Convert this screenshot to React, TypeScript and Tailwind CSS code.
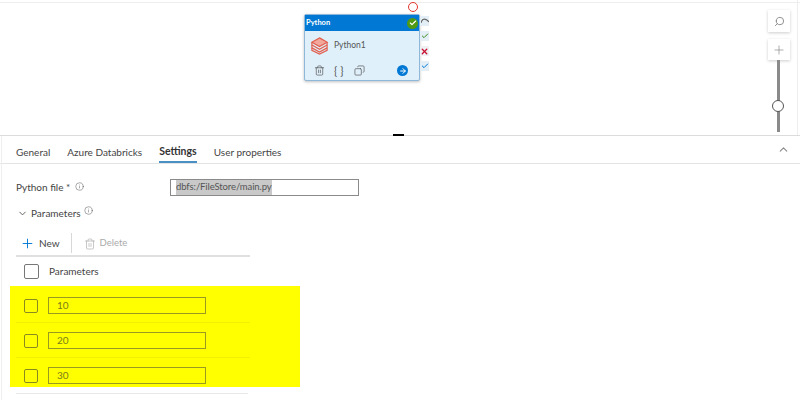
import { ChevronDown, ChevronUp, Copy, Info, Plus, Search, Trash2, ArrowRight, Check, X } from "lucide-react"

const tabs = ["General", "Azure Databricks", "Settings", "User properties"]

// Databricks style stacked layers logo
const LayersLogo = () => (
  <svg width="19" height="19" viewBox="0 0 20 20" fill="none" stroke="#e2604f" strokeWidth="1.3">
    <path d="M10 2 L18 6.5 L10 11 L2 6.5 Z" fill="#f3a79b" />
    <path d="M2 9.5 L10 14 L18 9.5" />
    <path d="M2 12.5 L10 17 L18 12.5" />
    <path d="M2 6.5 V15 L10 19 L18 15 V6.5" />
  </svg>
)

const PipelineNode = () => (
  <div className="absolute left-[304px] top-[14px] h-[67px] w-[116px] rounded-[2px] border border-[#8fb8d8] bg-[#dff0fb] shadow-[0_1px_3px_rgba(0,0,0,0.25)]">
    <div className="flex h-[16px] items-center justify-between bg-[#0078d4] pl-[1px] pr-[1px] text-[7.5px] font-bold text-white">
      <span>Python</span>
      <span className="flex h-[11px] w-[11px] items-center justify-center rounded-full bg-[#4f9a12]">
        <Check size={8} strokeWidth={3.5} />
      </span>
    </div>
    <div className="mt-[5px] flex items-center gap-[5px] pl-[5px] text-[8.5px] text-[#555]">
      <LayersLogo />
      <span>Python1</span>
    </div>
    <div className="mt-[10px] flex items-center pl-[9px] text-[#555]">
      <Trash2 size={11} strokeWidth={1.5} />
      <span className="ml-[9px] text-[11px] leading-none">{"{ }"}</span>
      <Copy size={11} strokeWidth={1.5} className="ml-[11px] -scale-x-100" />
      <span className="ml-[32px] flex h-[11px] w-[11px] items-center justify-center rounded-full bg-[#0078d4] text-white">
        <ArrowRight size={8} strokeWidth={3} />
      </span>
    </div>
  </div>
)

const SideBadges = () => (
  <div className="absolute left-[420px] top-[16px] flex w-[9px] flex-col gap-[5px]">
    <span className="flex h-[10px] w-[9px] items-center justify-center bg-[#e3eef6]">
      <svg width="8" height="6" viewBox="0 0 8 6" fill="none" stroke="#666" strokeWidth="1.2">
        <path d="M0 5 C1 0 5 0 8 4" />
      </svg>
    </span>
    <span className="flex h-[10px] w-[9px] items-center justify-center bg-[#e3eef6] text-[#3d8b1a]">
      <Check size={8} strokeWidth={3} />
    </span>
    <span className="flex h-[10px] w-[9px] items-center justify-center bg-[#eef0f4] text-[#c8102e]">
      <X size={9} strokeWidth={3.5} />
    </span>
    <span className="flex h-[10px] w-[9px] items-center justify-center bg-[#e3eef6] text-[#0078d4]">
      <Check size={8} strokeWidth={3} />
    </span>
  </div>
)

const ZoomControls = () => (
  <div className="absolute left-[768px] top-[10px] flex w-[22px] flex-col items-center">
    <div className="flex h-[22px] w-[22px] items-center justify-center bg-white text-[#888] shadow-[0_1px_3px_rgba(0,0,0,0.2)]">
      <Search size={11} className="-scale-x-100" />
    </div>
    <div className="mt-[7px] flex h-[21px] w-[22px] items-center justify-center bg-white text-[#777] shadow-[0_1px_3px_rgba(0,0,0,0.2)]">
      <Plus size={14} strokeWidth={1} />
    </div>
    <div className="relative ml-[-1px] h-[72px] w-[3px] bg-[#8a8a8a]">
      <span className="absolute left-[-5px] top-[40px] h-[12px] w-[12px] rounded-full border border-[#555] bg-white" />
    </div>
  </div>
)

const ParamRow = ({ value, line }: { value: string; line?: boolean }) => (
  <div className="relative flex h-[35px] items-center pl-[14px]">
    <span className="h-[14px] w-[14px] rounded-[2px] border border-[#8a8a20]" />
    <div className="ml-[10px] flex h-[17px] w-[158px] items-center border border-[#9a9a20] pl-[8px] text-[10px] text-[#7c7c1c]">
      {value}
    </div>
    {line && <span className="absolute bottom-0 left-[6px] h-px w-[234px] bg-[#f0f000]" />}
  </div>
)

export default function App() {
  return (
    <div className="relative h-[400px] w-[800px] overflow-hidden bg-white font-['Lato',sans-serif] text-[#444]">
      {/* Canvas */}
      <div className="relative h-[136px] border-b border-[#dcdcdc]">
        <div className="absolute left-0 top-[2px] h-px w-full bg-[#eeeeee]" />
        <div className="absolute right-[2px] top-0 h-full w-px bg-[#eeeeee]" />
        <span className="absolute left-[408px] top-[2px] h-[10px] w-[10px] rounded-full border border-[#e2352c]" />
        <PipelineNode />
        <SideBadges />
        <ZoomControls />
        <span className="absolute left-[393px] top-[134px] h-[2px] w-[11px] bg-black" />
      </div>

      {/* Tabs */}
      <div className="flex h-[28px] items-center border-b border-[#e4e4e4] pl-[16px] pr-[10px] text-[10px]">
        <div className="flex h-full flex-1 gap-[17px]">
          {tabs.map((t) => (
            <span
              key={t}
              className={`flex h-full items-center ${t === "Settings" ? "border-b-2 border-[#4a90c4] pt-[7px] text-[10.5px] font-bold text-[#333]" : "pt-[5px]"}`}
            >
              {t}
            </span>
          ))}
        </div>
        <ChevronUp size={13} className="text-[#888]" />
      </div>

      <div className="pl-[16px]">
        {/* Python file */}
        <div className="mt-[15px] flex h-[17px] items-center text-[10px]">
          <span className="w-[154px]">
            Python file * <Info size={9} strokeWidth={1.2} className="ml-[2px] inline -translate-y-[2px]" />
          </span>
          <div className="flex h-[17px] w-[189px] items-center border border-[#8a8a8a] pl-[5px] text-[9.5px] tracking-[-0.1px] text-[#555]">
            <span className="bg-[#c9c9c9]">dbfs:/FileStore/main.py</span>
          </div>
        </div>

        {/* Parameters */}
        <div className="mt-[9px] flex h-[16px] items-center text-[10px]">
          <ChevronDown size={11} className="ml-[1px] mr-[3px] text-[#555]" />
          <span>Parameters</span>
          <Info size={9} strokeWidth={1.2} className="ml-[3px] -translate-y-[3px]" />
        </div>

        {/* Toolbar */}
        <div className="mt-[8px] flex h-[28px] w-[234px] items-center border-b-2 border-[#e0e0e0] pt-[3px] text-[10px]">
          <Plus size={15} strokeWidth={1.5} className="ml-[4px] text-[#0078d4]" />
          <span className="ml-[4px]">New</span>
          <span className="ml-[11px] h-[20px] w-px -translate-y-[1px] bg-[#d8d8d8]" />
          <Trash2 size={12} strokeWidth={1.3} className="ml-[12px] text-[#aaa]" />
          <span className="ml-[4px] text-[9.5px] text-[#aaa]">Delete</span>
        </div>

        {/* Table header */}
        <div className="flex h-[29px] w-[234px] items-center pl-[8px] text-[10px]">
          <span className="h-[15px] w-[15px] rounded-[2px] border border-[#777]" />
          <span className="ml-[10px]">Parameters</span>
        </div>
      </div>

      {/* Highlighted rows */}
      <div className="ml-[10px] h-[101px] w-[290px] bg-[#ffff00] pt-[2px]">
        <ParamRow value="10" line />
        <ParamRow value="20" line />
        <ParamRow value="30" />
      </div>
      <div className="ml-[16px] mt-[6px] h-px w-[232px] bg-[#e8e8e8]" />
      <div className="absolute bottom-0 left-[1px] top-[136px] w-px bg-[#eeeeee]" />
    </div>
  )
}
